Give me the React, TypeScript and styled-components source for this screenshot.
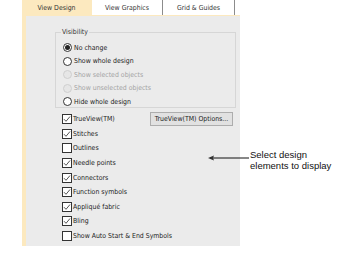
import React from "react";
import styled, { createGlobalStyle } from "styled-components";

const Global = createGlobalStyle`
  html, body { margin: 0; padding: 0; background: #ffffff; }
  body {
    font-family: "DejaVu Sans Condensed", "DejaVu Sans", sans-serif;
    font-stretch: condensed;
  }
`;

const uiFont = `
  font-family: "DejaVu Sans Condensed", "DejaVu Sans", sans-serif;
  font-stretch: condensed;
  font-size: 6.9px;
  white-space: nowrap;
`;

const Page = styled.div`
  position: relative;
  width: 362px;
  height: 262px;
  padding-left: 22px;
  box-sizing: border-box;
`;

const Panel = styled.div`
  width: 218px;
  height: 246px;
  display: flex;
  flex-direction: column;
`;

const TabBar = styled.div`
  display: flex;
  height: 15px;
  background: #ffffff;
`;

const Tab = styled.div<{ $active?: boolean; $w: number }>`
  ${uiFont}
  width: ${(p) => p.$w}px;
  box-sizing: border-box;
  display: flex;
  align-items: center;
  justify-content: center;
  color: #333;
  background: ${(p) => (p.$active ? "#fce9bf" : "#ffffff")};
  border-right: 1px solid ${(p) => (p.$active ? "#fce9bf" : "#8c8c8c")};
`;

const Body = styled.div`
  flex: 1;
  background: #ebebeb;
  border-top: 1px solid #fce9bf;
  border-left: 4px solid #fce9bf;
  padding: 12px 4px 0 29px;
  display: flex;
  flex-direction: column;
`;

const Group = styled.fieldset`
  margin: 0;
  border: 1px solid #d6d6d6;
  padding: 5px 0 3px 7px;
  height: 80px;
  box-sizing: border-box;
  display: flex;
  flex-direction: column;
`;

const Legend = styled.legend`
  ${uiFont}
  color: #333;
  padding: 0 1px;
  margin-left: -2px;
  line-height: 8px;
`;

const OptRow = styled.div<{ $disabled?: boolean }>`
  ${uiFont}
  display: flex;
  align-items: center;
  height: 13.5px;
  color: ${(p) => (p.$disabled ? "#a3a3a3" : "#222")};
  gap: 2px;
`;

const Radio = styled.span<{ $checked?: boolean; $disabled?: boolean }>`
  width: 9px;
  height: 9px;
  flex: none;
  border-radius: 50%;
  box-sizing: border-box;
  border: 1px solid ${(p) => (p.$disabled ? "#cfcfcf" : "#333")};
  background: ${(p) => (p.$disabled ? "#e6e6e6" : "#fff")};
  display: flex;
  align-items: center;
  justify-content: center;
  &::after {
    content: "";
    width: 5px;
    height: 5px;
    border-radius: 50%;
    background: ${(p) => (p.$checked ? "#222" : "transparent")};
  }
`;

const Lower = styled.div`
  display: flex;
  margin-top: 4px;
  padding-left: 7px;
`;

const CheckList = styled.div`
  display: flex;
  flex-direction: column;
  flex: 1 1 0;
  min-width: 0;
`;

const CheckRow = styled.div`
  ${uiFont}
  display: flex;
  align-items: center;
  height: 14.6px;
  color: #222;
  gap: 1px;
`;

const Box = styled.span`
  width: 10px;
  height: 10px;
  flex: none;
  box-sizing: border-box;
  border: 1px solid #333;
  background: #fff;
  display: flex;
  align-items: center;
  justify-content: center;
`;

const OptionsButton = styled.button`
  ${uiFont}
  margin-right: 3px;
  width: 83px;
  height: 14px;
  padding: 0;
  color: #222;
  background: #e1e1e1;
  border: 1px solid #adadad;
  align-self: flex-start;
  flex: none;
`;

const Callout = styled.div`
  position: absolute;
  left: 208px;
  top: 150px;
  display: flex;
  align-items: flex-start;
`;

const CalloutText = styled.div`
  margin-left: 1px;
  font-family: "Liberation Sans", Arial, sans-serif;
  font-stretch: normal;
  font-size: 9.5px;
  line-height: 10.5px;
  color: #111;
`;

const Check = () => (
  <svg width="8" height="8" viewBox="0 0 8 8">
    <path d="M1 4.2 L3 6.3 L7 1.5" fill="none" stroke="#555" strokeWidth="1" />
  </svg>
);

const checks: [string, boolean][] = [
  ["TrueView(TM)", true],
  ["Stitches", true],
  ["Outlines", false],
  ["Needle points", true],
  ["Connectors", true],
  ["Function symbols", true],
  ["Appliqué fabric", true],
  ["Bling", true],
  ["Show Auto Start & End Symbols", false],
];

const radios: [string, boolean, boolean][] = [
  ["No change", true, false],
  ["Show whole design", false, false],
  ["Show selected objects", false, true],
  ["Show unselected objects", false, true],
  ["Hide whole design", false, false],
];

export default function App() {
  return (
    <>
      <Global />
      <Page>
        <Panel>
          <TabBar>
            <Tab $active $w={70}>View Design</Tab>
            <Tab $w={71}>View Graphics</Tab>
            <Tab $w={72}>Grid &amp; Guides</Tab>
          </TabBar>
          <Body>
            <Group>
              <Legend>Visibility</Legend>
              {radios.map(([label, checked, disabled]) => (
                <OptRow key={label} $disabled={disabled}>
                  <Radio $checked={checked} $disabled={disabled} />
                  {label}
                </OptRow>
              ))}
            </Group>
            <Lower>
              <CheckList>
                {checks.map(([label, on]) => (
                  <CheckRow key={label}>
                    <Box>{on && <Check />}</Box>
                    {label}
                  </CheckRow>
                ))}
              </CheckList>
              <OptionsButton>TrueView(TM) Options...</OptionsButton>
            </Lower>
          </Body>
        </Panel>
        <Callout>
          <svg width="41" height="16" viewBox="0 0 41 16">
            <path d="M2 8 H41" stroke="#111" strokeWidth="1" />
            <path d="M0 8 L6 5.5 L5 8 L6 10.5 Z" fill="#333" />
          </svg>
          <CalloutText>
            Select design
            <br />
            elements to display
          </CalloutText>
        </Callout>
      </Page>
    </>
  );
}
